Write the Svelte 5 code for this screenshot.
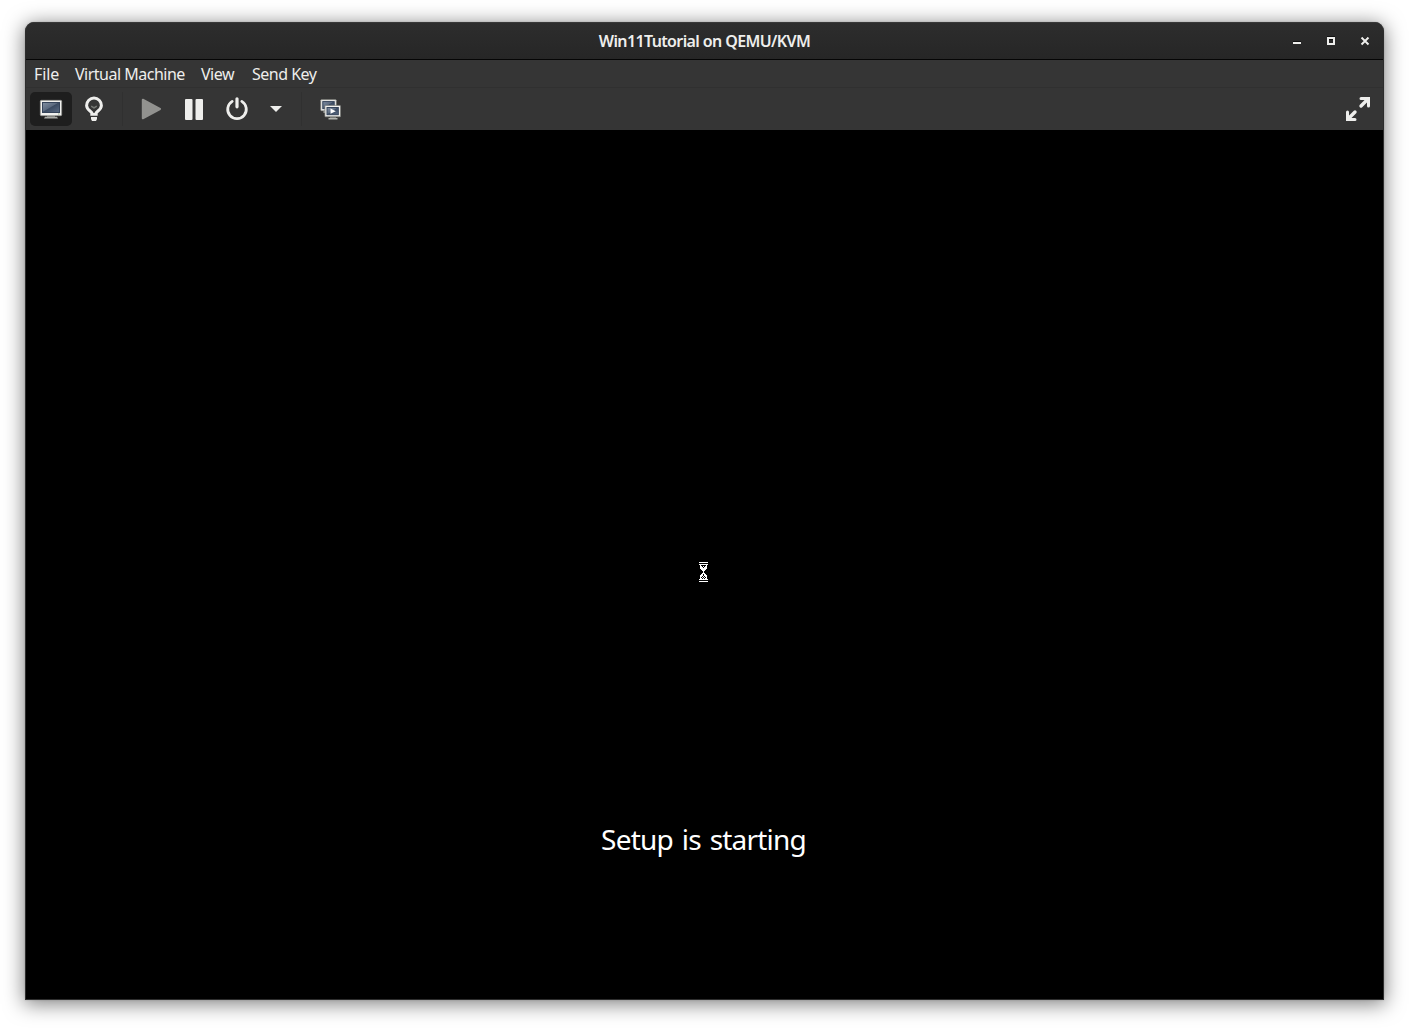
<script>
  const menus = [
    { label: 'File', cls: 'file' },
    { label: 'Virtual Machine', cls: 'machine' },
    { label: 'View', cls: 'view' },
    { label: 'Send Key', cls: 'key' }
  ];
  // Busy cursor bitmap, one character per pixel
  const hourglass = [
    '#########',
    '.........',
    '#########',
    '.#.....#.',
    '.##.#.##.',
    '.###.###.',
    '.#######.',
    '..#####..',
    '...###...',
    '....#....',
    '....#....',
    '...###...',
    '..##.##..',
    '.###.###.',
    '.##.#.##.',
    '.#.#.#.#.',
    '.##.#.##.',
    '#########',
    '.........',
    '#########'
  ];
  const pixels = hourglass.flatMap((row, y) =>
    [...row].flatMap((c, x) => (c === '#' ? [`M${x} ${y}h1v1h-1z`] : []))
  ).join('');
</script>

<main class="desktop">
  <section class="window">
    <header class="titlebar">
      <span></span>
      <h1>Win11Tutorial on QEMU/KVM</h1>
      <div class="controls">
        <button aria-label="Minimize"><svg width="10" height="10" shape-rendering="crispEdges"><path d="M1 5h8v1H1z" fill="#111" /><path d="M1 6h8v2H1z" fill="#eeeeec" /></svg></button>
        <button aria-label="Maximize"><svg width="10" height="10" shape-rendering="crispEdges"><path d="M1 0h8v1H1zM3 3h4v1H3z" fill="#111" /><path d="M1 1h8v8H1zM3 3v4h4V3z" fill="#eeeeec" fill-rule="evenodd" /></svg></button>
        <button aria-label="Close"><svg width="10" height="10"><path d="M1.5 .8l7 7M8.5 .8l-7 7" stroke="#111" stroke-width="1.7" /><path d="M1.5 1.5l7 7M8.5 1.5l-7 7" stroke="#eeeeec" stroke-width="2" /></svg></button>
      </div>
    </header>
    <nav class="menubar">
      {#each menus as m}<span class={m.cls}>{m.label}</span>{/each}
    </nav>
    <div class="toolbar">
      <button class="tool active" aria-label="Console">
        <svg width="24" height="24" viewBox="0 0 24 24">
          <defs><linearGradient id="lcd" x1="0" y1="0" x2="1" y2="1"><stop offset="0" stop-color="#8290a2" /><stop offset=".45" stop-color="#5c6b80" /><stop offset=".5" stop-color="#3b4b62" /><stop offset="1" stop-color="#5a6b83" /></linearGradient></defs>
          <path d="M8 18h8v2H8z" fill="#777975" /><path d="M6 19.8h12l1 1.7H5z" fill="#aaaca8" />
          <rect x="1.3" y="3.3" width="21.4" height="15.4" rx="1" fill="#f1f1ee" stroke="#8b8d88" stroke-width=".7" />
          <rect x="3.5" y="5.5" width="17" height="10" fill="url(#lcd)" stroke="#35445a" />
          <path d="M19 17h1.5" stroke="#9aaf87" />
        </svg>
      </button>
      <button class="tool" aria-label="Details">
        <svg width="24" height="26" viewBox="0 0 24 26">
          <path d="M9.8 18.2v-1.3c0-1.4-5.2-2.9-5.2-7.4a7.4 7.4 0 0 1 14.8 0c0 4.5-5.2 6-5.2 7.4v1.3z" fill="none" stroke="#eeeeec" stroke-width="3" />
          <path d="M9.5 9.8c0 1.5 1.2.8 2.5 2.1 1.3-1.3 2.5-.6 2.5-2.1" fill="none" stroke="#777975" stroke-width="1.4" />
          <path d="M9 21h6v2l-1 2h-4l-1-2z" fill="#eeeeec" />
        </svg>
      </button>
      <i class="sep first"></i>
      <button class="tool" aria-label="Run"><svg width="24" height="24"><path d="M3.8 2.7L21 12 3.8 21.3z" fill="#92928f" stroke="#92928f" stroke-width="2" stroke-linejoin="round" /></svg></button>
      <button class="tool pause" aria-label="Pause"><svg width="24" height="24"><rect x="3" y="2" width="7.5" height="21" rx="1" fill="#eeeeec" /><rect x="13.5" y="2" width="7.5" height="21" rx="1" fill="#eeeeec" /></svg></button>
      <button class="tool" aria-label="Shut down"><svg width="24" height="24" fill="none" stroke="#eeeeec" stroke-linecap="round"><path d="M7.2 4.4a9.3 9.3 0 1 0 9.6 0" stroke-width="2.8" /><path d="M12 1.8v8" stroke-width="3.2" /></svg></button>
      <button class="drop" aria-label="Power menu"><svg width="12" height="6"><path d="M0 0h12L6 6z" fill="#eeeeec" /></svg></button>
      <i class="sep second"></i>
      <button class="tool" aria-label="Snapshots">
        <svg width="24" height="24" viewBox="0 0 24 24">
          <path d="M4.5 14h4v2h-4z" fill="#aaaca8" />
          <rect x="1.8" y="2.7" width="15.4" height="11" rx=".6" fill="#eeeeec" stroke="#959792" stroke-width=".6" />
          <rect x="3.8" y="4.6" width="11.4" height="7" fill="url(#lcd)" stroke="#35445a" />
          <path d="M11 20h6v2h-6z" fill="#777975" /><path d="M9.5 21h9v1.4h-9z" fill="#b4b6b1" />
          <rect x="5.9" y="8.4" width="15.6" height="11.4" rx=".6" fill="#f3f3f0" stroke="#777975" stroke-width=".7" />
          <rect x="8" y="10.5" width="11.3" height="7.2" fill="url(#lcd)" stroke="#35445a" />
          <path d="M11.5 11.6l5.3 2.6-5.3 2.5z" fill="#fff" />
        </svg>
      </button>
      <button class="tool full" aria-label="Fullscreen"><svg width="24" height="24" viewBox="0 0 24 24"><g fill="none" stroke="#eeeeec" stroke-width="3" stroke-linecap="round" stroke-linejoin="miter"><path d="M15 1.5h7.5V9M1.5 15v7.5H9" /><path d="M15 9l6-6M9 15l-6 6" stroke-width="3.4" /></g></svg></button>
    </div>
    <div class="screen">
      <svg class="busy" width="9" height="20" shape-rendering="crispEdges"><path d={pixels} fill="#fff" /></svg>
      <p>Setup is starting</p>
    </div>
  </section>
</main>

<style>
  :global(body) { background: #fff; }
  .desktop { box-sizing: border-box; width: 1409px; height: 1028px; padding: 22px 25px 28px; overflow: hidden; font-family: "Noto Sans", sans-serif; }
  .window { box-sizing: border-box; width: 1359px; height: 978px; display: flex; flex-direction: column; border: 1px solid #2d2d2d; border-top: 0; border-radius: 9px 9px 0 0; background: #353535; overflow: hidden; box-shadow: 0 3px 20px 1px rgba(0,0,0,.5), 0 0 2px rgba(0,0,0,.2); }
  button { border: 0; padding: 0; margin: 0; background: none; display: flex; align-items: center; justify-content: center; }
  svg { display: block; flex: none; }
  .titlebar { box-sizing: border-box; height: 38px; flex: none; display: grid; grid-template-columns: 1fr auto 1fr; align-items: center; background: linear-gradient(#2d2d2d, #262626); border-top: 1px solid #383838; border-bottom: 1px solid #050505; }
  h1 { margin: 0; font-size: 16px; line-height: 36px; height: 36px; font-weight: 600; letter-spacing: -.62px; color: #eeeeec; white-space: nowrap; }
  .controls { display: flex; justify-content: flex-end; gap: 24px; padding: 0 13px 0 0; }
  .menubar { box-sizing: border-box; height: 28px; flex: none; display: flex; gap: 16px; padding: 0 8px; border-bottom: 1px solid #303030; color: #eeeeec; font-size: 16px; line-height: 28px; letter-spacing: -.5px; white-space: nowrap; }
  .file { width: 25px; letter-spacing: -.1px; } .machine { width: 110px; } .view { width: 35px; } .key { width: 65px; }
  .toolbar { box-sizing: border-box; height: 42px; flex: none; display: flex; align-items: center; padding: 0 4px; }
  .tool { width: 42px; height: 34px; margin-right: 1px; }
  .active { background: #1e1e1e; border-radius: 5px; }
  .drop { width: 24px; margin: 0 0 0 5px; }
  .sep { width: 1px; height: 34px; background: #303030; }
  .first { margin: 0 7px 0 6px; }
  .second { margin: 0 8px 0 13px; }
  .full { margin: 0 0 0 auto; }
  .screen { flex: 1; background: #000; display: flex; flex-direction: column; align-items: center; padding-right: 2px; }
  .busy { margin-top: 432px; }
  p { margin: 237px 0 0; color: #fff; font-size: 28px; line-height: 40px; letter-spacing: -.8px; word-spacing: 2.4px; }
</style>
